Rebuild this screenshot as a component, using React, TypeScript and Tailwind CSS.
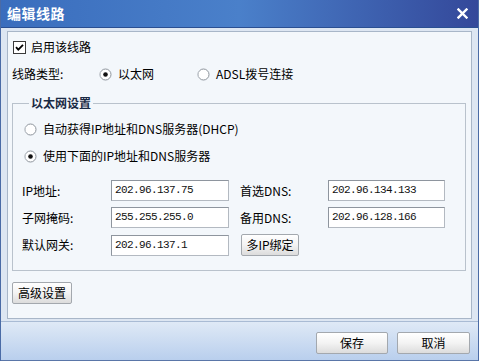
import type { ReactNode } from 'react'

const cjk = { fontFamily: '"Noto Sans CJK SC", "Liberation Sans", sans-serif' }
const mono = { fontFamily: '"Liberation Mono", "Noto Sans CJK SC", monospace' }

function CheckBox({ checked }: { checked: boolean }) {
  return (
    <svg width="13" height="13" viewBox="0 0 13 13" className="shrink-0">
      <rect x="0.5" y="0.5" width="12" height="12" fill="#fff" stroke="#3a3a3a" />
      {checked && <path d="M3 6.2 L5.3 8.6 L10 3.8" fill="none" stroke="#000" strokeWidth="1.8" />}
    </svg>
  )
}

function Radio({ checked }: { checked: boolean }) {
  return (
    <svg width="13" height="13" viewBox="0 0 13 13" className="shrink-0">
      <circle cx="6.5" cy="6.5" r="5.5" fill="#fff" stroke="#8d949c" />
      <path d="M2.6 10.4 A5.5 5.5 0 0 1 2.6 2.6" fill="none" stroke="#cdd2d8" strokeWidth="1" />
      {checked && <circle cx="6.5" cy="6.5" r="2.3" fill="#111" />}
    </svg>
  )
}

function Field({ value, width }: { value: string; width: string }) {
  return (
    <div
      className={`${width} h-[21px] flex items-center px-[3px] bg-white border border-[#b3b9c1] border-t-[#8e959e] border-l-[#8e959e] text-[11px] tracking-[-0.6px] text-[#111]`}
      style={mono}
    >
      {value}
    </div>
  )
}

function Btn({ children, className }: { children: ReactNode; className: string }) {
  return (
    <div
      className={`${className} h-[22px] flex items-center justify-center text-[12px] text-black rounded-[2px] border border-[#a3a8ae] bg-gradient-to-b from-[#ffffff] via-[#f3f3f3] to-[#dcdcdc]`}
      style={cjk}
    >
      {children}
    </div>
  )
}

export default function App() {
  return (
    <div className="w-[479px] h-[361px] flex flex-col overflow-hidden border-l border-r border-[#4a6ba6] bg-[#cddbee]" style={cjk}>
      <div className="h-[28px] shrink-0 flex items-center justify-between pl-[6px] pr-[10px] bg-gradient-to-r from-[#3a6dbd] via-[#4a80ca] to-[#34489a] border-b border-[#2a4f92]">
        <span className="text-[14px] font-bold text-white tracking-[0.5px]">编辑线路</span>
        <svg width="11" height="11" viewBox="0 0 11 11">
          <path d="M1.5 1.5 L9.5 9.5 M9.5 1.5 L1.5 9.5" stroke="#fff" strokeWidth="2.4" strokeLinecap="square" />
        </svg>
      </div>

      <div className="h-[293px] shrink-0 px-[6px] pt-[3px] bg-[#dde6f2]">
        <div className="h-[288px] flex flex-col border border-[#a8b6c8] bg-[#f3f7fb] text-[12px] text-black">
          <div className="mt-[7px] h-[16px] flex items-center pl-[5px] gap-[5px]">
            <CheckBox checked />
            <span>启用该线路</span>
          </div>

          <div className="mt-[11px] h-[16px] flex items-center pl-[4px]">
            <span className="w-[87px]">线路类型:</span>
            <Radio checked />
            <span className="ml-[6px] w-[79px]">以太网</span>
            <Radio checked={false} />
            <span className="ml-[6px]">ADSL拨号连接</span>
          </div>

          <fieldset className="mt-[13px] ml-[4px] mr-[5px] border border-[#b9c2cc] pb-[14px]">
            <legend className="ml-[16px] px-[2px] h-[16px] leading-[16px] font-bold text-[#1a2a44]">以太网设置</legend>
            <div className="mt-[10px] h-[16px] flex items-center pl-[11px]">
              <Radio checked={false} />
              <span className="ml-[6px]">自动获得IP地址和DNS服务器(DHCP)</span>
            </div>
            <div className="mt-[11px] h-[16px] flex items-center pl-[11px]">
              <Radio checked />
              <span className="ml-[6px]">使用下面的IP地址和DNS服务器</span>
            </div>

            <div className="mt-[16px] pl-[9px] flex flex-col gap-[6px]">
              <div className="flex items-center">
                <span className="w-[89px]">IP地址:</span>
                <Field value="202.96.137.75" width="w-[118px]" />
                <span className="ml-[11px] w-[88px]">首选DNS:</span>
                <Field value="202.96.134.133" width="w-[117px]" />
              </div>
              <div className="flex items-center">
                <span className="w-[89px]">子网掩码:</span>
                <Field value="255.255.255.0" width="w-[118px]" />
                <span className="ml-[11px] w-[88px]">备用DNS:</span>
                <Field value="202.96.128.166" width="w-[117px]" />
              </div>
              <div className="flex items-center">
                <span className="w-[89px]">默认网关:</span>
                <Field value="202.96.137.1" width="w-[118px]" />
                <Btn className="ml-[12px] w-[58px]">多IP绑定</Btn>
              </div>
            </div>
          </fieldset>

          <div className="mt-[11px] ml-[4px]">
            <Btn className="w-[60px]">高级设置</Btn>
          </div>
        </div>
      </div>

      <div className="flex-1 border-t border-[#a9bbd4] border-b border-b-[#5a76a8] bg-gradient-to-b from-[#dfe9f6] to-[#b9cfed] flex items-start justify-end gap-[9px] pt-[10px] pr-[8px]">
        <Btn className="w-[72px]">保存</Btn>
        <Btn className="w-[73px]">取消</Btn>
      </div>
    </div>
  )
}
